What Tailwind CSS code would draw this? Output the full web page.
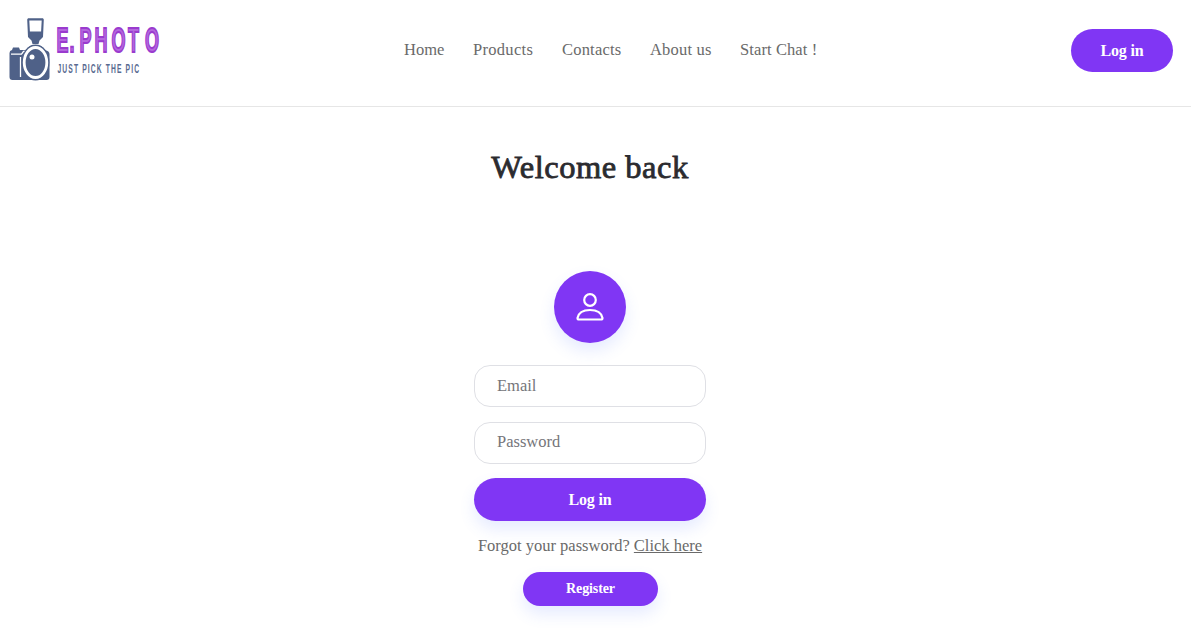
<!DOCTYPE html>
<html lang="en">
<head>
<meta charset="utf-8">
<title>E.Photo</title>
<script src="https://cdn.jsdelivr.net/npm/@tailwindcss/browser@4"></script>
</head>
<body class="h-[632px] overflow-hidden bg-white font-['Liberation_Serif',serif] text-base text-[#6a6a6a]">
<header class="flex h-[107px] items-start border-b border-[#e6e6e6]">
  <a href="#" class="w-[404px] shrink-0">
    <svg class="block" width="170" height="90" viewBox="0 0 170 90">
      <g fill="#4f6188">
        <path fill-rule="evenodd" d="M28 18.300H43L43.800 19.500L43 37L39.500 40.500L38.500 44H32.500L31.500 40.500L28 37L27.200 19.500ZM29.300 20.500L29.900 31.500H41.100L41.700 20.500Z"/>
        <path d="M13 47.500h6l1 2.500h6q3-5 9.500-5t9.500 5q4.500 1 4.500 4v23q0 3-3 3H12.500q-3 0-3-3V53q0-2.500 2.500-3z"/>
      </g>
      <path d="M11 54.200h10.500l2-2.700h2.500M20.500 57v20" fill="none" stroke="#fff" stroke-width="1.300"/>
      <ellipse cx="35.500" cy="62.500" rx="14" ry="18" fill="#4f6188"/>
      <ellipse cx="35.500" cy="62.500" rx="11.300" ry="15" fill="#4f6188" stroke="#fff" stroke-width="2.800"/>
      <circle cx="32" cy="57" r="2.500" fill="#fff"/>
      <text transform="translate(0 52) scale(.5 1)" x="113 139 159 189 223 256 290" y="0" font-family="Liberation Sans" font-weight="700" font-size="36" fill="#b468de" stroke="#9a3bce" stroke-width="2">E.PHOTO</text>
      <text transform="translate(57.500 73) scale(.54 1)" textLength="151" font-family="Liberation Sans" font-weight="700" font-size="12.500" fill="#596a90">JUST PICK THE PIC</text>
    </svg>
  </a>
  <nav class="mt-[38px] flex whitespace-nowrap text-[16.5px] leading-6">
    <a href="#" class="w-[69px]">Home</a>
    <a href="#" class="w-[89px] tracking-[0.3px]">Products</a>
    <a href="#" class="w-[88px] tracking-[0.2px]">Contacts</a>
    <a href="#" class="w-[90px] tracking-[0.2px]">About us</a>
    <a href="#" class="tracking-[0.1px]">Start Chat !</a>
  </nav>
  <a href="#" class="mt-[29px] mr-[18px] ml-auto flex h-[43px] w-[102px] items-center justify-center rounded-full bg-[#8036f4] font-bold tracking-[-0.2px] text-white">Log in</a>
</header>
<main class="flex w-[1180px] flex-col items-center">
  <h1 class="mt-[40px] text-[32.5px] leading-10 tracking-[0.5px] whitespace-nowrap text-[#2b2b2f] [-webkit-text-stroke:0.8px_#2b2b2f]">Welcome back</h1>
  <div class="mt-[84px] flex size-[72px] items-center justify-center rounded-full bg-[#8036f4] shadow-[0_8px_16px_rgba(80,110,255,0.14)]">
    <svg width="28" height="28" viewBox="0 0 28 28" fill="none" stroke="#fff" stroke-width="2.200"><circle cx="14" cy="7" r="5.800"/><path d="M3 26.500Q1.500 26.500 1.500 25C2.500 20 7 17 14 17s11.500 3 12.500 8q0 1.500-1.500 1.500z"/></svg>
  </div>
  <form class="mt-[22px] flex w-[232px] flex-col items-center">
    <input type="email" placeholder="Email" class="h-[42px] w-full rounded-[16px] border border-[#dfe0e5] px-[22px] text-[16.5px] placeholder:text-[#75757a]">
    <input type="password" placeholder="Password" class="mt-[15px] h-[42px] w-full rounded-[16px] border border-[#dfe0e5] px-[22px] pb-0.5 text-[16.5px] placeholder:text-[#75757a]">
    <button type="button" class="mt-[14px] h-[43px] w-full rounded-full bg-[#8036f4] font-bold tracking-[-0.2px] text-white shadow-[0_8px_16px_rgba(80,110,255,0.14)]">Log in</button>
    <p class="mt-[13px] text-[16.5px] leading-6 whitespace-nowrap">Forgot your password? <a href="#" class="underline">Click here</a></p>
    <button type="button" class="mt-[14px] ml-px h-[34px] w-[135px] rounded-full bg-[#8036f4] text-sm font-bold tracking-[-0.1px] text-white shadow-[0_8px_16px_rgba(80,110,255,0.14)]">Register</button>
  </form>
</main>
</body>
</html>
